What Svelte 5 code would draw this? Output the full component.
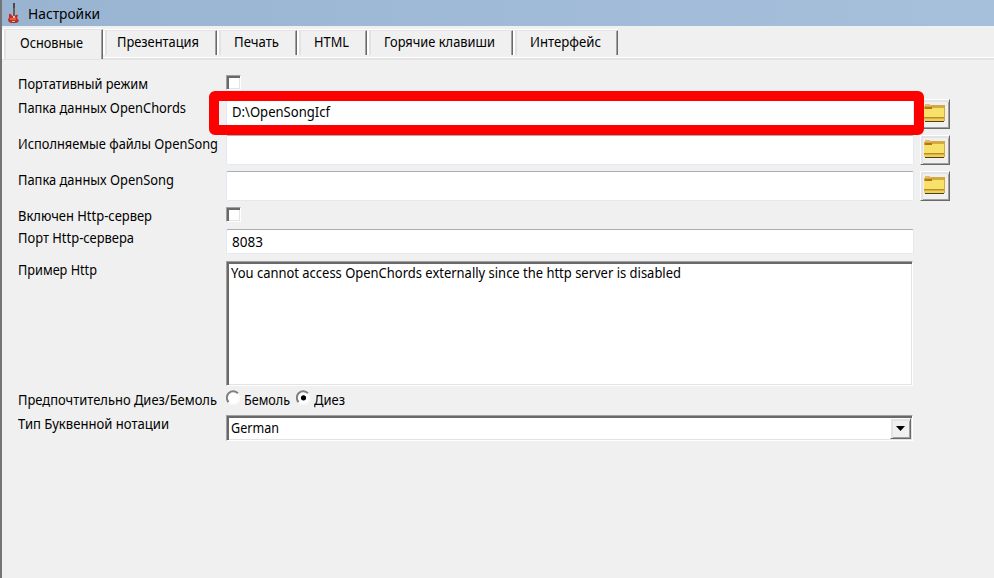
<script>
  const tabs = [
    { name: 'Основные', w: 101, pad: 16, text: 63, active: true },
    { name: 'Презентация', w: 114, pad: 12, text: 82 },
    { name: 'Печать', w: 80, pad: 15, text: 45 },
    { name: 'HTML', w: 70, pad: 15, text: 35 },
    { name: 'Горячие клавиши', w: 146, pad: 15, text: 111 },
    { name: 'Интерфейс', w: 105, pad: 15, text: 71 }
  ];

  const rows = [
    { label: 'Портативный режим', text: 130, h: 23, kind: 'check' },
    { label: 'Папка данных OpenChords', text: 168, h: 36, kind: 'folder', value: 'D:\\OpenSongIcf', vw: 98, marked: true },
    { label: 'Исполняемые файлы OpenSong', text: 200, h: 36, kind: 'folder' },
    { label: 'Папка данных OpenSong', text: 156, h: 37, kind: 'folder' },
    { label: 'Включен Http-сервер', text: 134, h: 22, kind: 'check' },
    { label: 'Порт Http-сервера', text: 116, h: 32, kind: 'port', value: '8083', vw: 31 },
    { label: 'Пример Http', text: 79, h: 129, kind: 'area', value: 'You cannot access OpenChords externally since the http server is disabled', vw: 450 },
    { label: 'Предпочтительно Диез/Бемоль', text: 199, h: 25, kind: 'radio' },
    { label: 'Тип Буквенной нотации', text: 151, h: 30, kind: 'select', value: 'German', vw: 48 }
  ];

  // Condenses a caption horizontally so it takes the given width.
  function fit(node, width) {
    const natural = node.getBoundingClientRect().width;
    node.style.transform = `scaleX(${width / natural})`;
    node.style.marginRight = width - natural + 'px';
  }
</script>

<div class="window">
  <header>
    <svg class="guitar" width="14" height="22" viewBox="0 0 14 22">
      <path d="M6 1h2v5H6z" fill="#484951" />
      <path d="M6.2 5h1.6v9H6.2z" fill="#68413f" />
      <path d="M2 12q2-1 3 2h3q1-2 3-1l-1 3q3 3 1 4-4 2-9 0-2-3 0-4z" fill="#c92a1d" />
      <path d="M3 16h6v2H3z" fill="#ef5941" />
      <path d="M6 14h2v2H6zM5 19h3v1H5z" fill="#d9c6bd" />
      <path d="M2 19q4 2 9 0v1q-4 2-9 0z" fill="#84383b" />
    </svg>
    <span class="t" use:fit={72}>Настройки</span>
  </header>

  <nav>
    {#each tabs as tab}
      <div class="tab" class:active={tab.active} style="width:{tab.w}px;padding-left:{tab.pad}px">
        <span class="t" use:fit={tab.text}>{tab.name}</span>
      </div>
    {/each}
  </nav>

  <main>
    {#each rows as row}
      <div class="row {row.kind}" style="height:{row.h}px">
        <div class="label"><span class="t" use:fit={row.text}>{row.label}</span></div>
        {#if row.kind === 'check'}
          <div class="box"></div>
        {:else if row.kind === 'radio'}
          {#each [{ n: 'Бемоль', w: 46 }, { n: 'Диез', w: 31, on: true }] as opt}
            <div class="option">
              <svg width="15" height="15" viewBox="0 0 15 15">
                <circle cx="7.5" cy="8" r="6" fill="#fff" />
                <path d="M2.6 12.2A6.2 6.2 0 0 1 12 3.4" fill="none" stroke="#808080" stroke-width="2" />
                <path d="M12 3.4A6.2 6.2 0 0 1 2.6 12.2" fill="none" stroke="#fafafa" stroke-width="1.5" />
                {#if opt.on}<circle cx="7.5" cy="7.8" r="2.6" fill="#000" />{/if}
              </svg>
              <span class="t" use:fit={opt.w}>{opt.n}</span>
            </div>
          {/each}
        {:else}
          <div class="field">
            {#if row.value}<span class="t" use:fit={row.vw}>{row.value}</span>{/if}
            {#if row.kind === 'select'}
              <div class="drop">
                <svg width="9" height="5" viewBox="0 0 9 5"><path d="M0 0h9L4.5 5z" /></svg>
              </div>
            {/if}
          </div>
          {#if row.kind === 'folder'}
            <div class="browse">
              <svg width="21" height="18" viewBox="0 0 21 18" shape-rendering="crispEdges">
                <path d="M1 0h5v1h1v2H1z" fill="#e2bd5c" />
                <path d="M0 2h7V1h14v4H0z" fill="#d4a93f" />
                <path d="M1 3h7v2H1z" fill="#b9731f" />
                <path d="M0 5h8V4h13v9H0z" fill="#f8e16a" />
                <path d="M0 13h21v1H0z" fill="#b8892a" />
                <path d="M0 14h21v1H0z" fill="#dcb044" />
                <path d="M0 15h21v2H0z" fill="#efd055" />
                <path d="M20 2h1v15h-1z" fill="#d2aa40" />
                <path d="M1 17h19v1H1z" fill="#4b421f" />
              </svg>
            </div>
          {/if}
          {#if row.marked}<div class="marker"></div>{/if}
        {/if}
      </div>
    {/each}
  </main>
</div>

<style>
  :global(body) { overflow: hidden; }
  .window {
    box-sizing: border-box;
    width: 994px;
    height: 578px;
    border-left: 2px solid #747474;
    background: #f0f0f0;
    font: 14px/18px "Noto Sans", sans-serif;
    color: #000;
  }
  .t { display: inline-block; white-space: pre; transform-origin: 0 0; flex: none; }
  header {
    height: 26px;
    display: flex;
    align-items: flex-start;
    background: linear-gradient(90deg, #99b4d1, #a6c0dc);
  }
  .guitar { margin: 2px 7px 0 5px; flex: none; }
  header .t { margin-top: 5px; }
  nav {
    box-sizing: border-box;
    height: 34px;
    padding-top: 2px;
    display: flex;
    align-items: flex-start;
    background: linear-gradient(#f0f0f0 31px, #fff 31px, #fff 32px, #e3e3e3 32px);
  }
  .tab {
    box-sizing: border-box;
    height: 25px;
    margin-top: 2px;
    border-top: 1px solid #e3e3e3;
    border-left: 1px solid #fff;
    border-right: 1px solid #696969;
    box-shadow: inset 2px 0 #e3e3e3, inset -1px 0 #a0a0a0, 0 -1px #fff;
    border-top-left-radius: 2px;
    padding-top: 2px;
    margin-left: 1px;
    background: #f0f0f0;
    flex: none;
  }
  .tab + .tab { margin-left: 0; border-left-width: 2px; }
  .tab.active { height: 30px; margin: 1px 0 0; padding-top: 4px; border-left-width: 2px; }
  main { padding: 15px 0 0 16px; }
  .row { display: flex; align-items: flex-start; position: relative; }
  .label { width: 208px; flex: none; }
  .folder .label, .radio .label { padding-top: 1px; }
  .box {
    box-sizing: border-box;
    width: 15px;
    height: 15px;
    background: #fff;
    border: 1px solid #fff;
    border-top-color: #a0a0a0;
    border-left-color: #a0a0a0;
    box-shadow: inset 2px 2px #696969, inset -1px -1px #e3e3e3;
  }
  .field { box-sizing: border-box; background: #fff; width: 688px; flex: none; }
  .folder .field, .port .field {
    height: 30px;
    border: 1px solid #e2e9f0;
    border-top-color: #abadb3;
    border-radius: 2px;
    padding: 3px 0 0 5px;
  }
  .folder .field { margin-top: 1px; }
  .port .field { height: 25px; }
  .area .field, .select .field {
    width: 687px;
    height: 125px;
    border: 1px solid #fff;
    border-top-color: #a0a0a0;
    border-left-color: #a0a0a0;
    box-shadow: inset 2px 2px #696969, inset -1px -1px #e3e3e3;
    padding: 2px 0 0 4px;
  }
  .select .field {
    height: 26px;
    display: flex;
    justify-content: space-between;
    padding-right: 1px;
  }
  .select .field .t { margin-top: 1px; }
  .drop, .browse {
    box-sizing: border-box;
    display: flex;
    align-items: center;
    justify-content: center;
    background: #f0f0f0;
    border: 1px solid #fff;
    border-right-color: #696969;
    border-bottom-color: #696969;
    box-shadow: inset 2px 2px #e3e3e3, inset -1px -1px #a0a0a0;
  }
  .drop { width: 21px; height: 21px; }
  .browse {
    width: 30px;
    height: 30px;
    margin: 1px 0 0 6px;
    padding: 4px 0 0 3px;
    align-items: flex-start;
    justify-content: flex-start;
  }
  .option { display: flex; gap: 3px; margin-right: 6px; }
  .option .t { padding-top: 1px; }
  .marker {
    position: absolute;
    box-sizing: border-box;
    left: 191px;
    top: -7px;
    width: 715px;
    height: 44px;
    border: 10px solid #f00;
    border-radius: 6px;
    z-index: 1;
  }
</style>
